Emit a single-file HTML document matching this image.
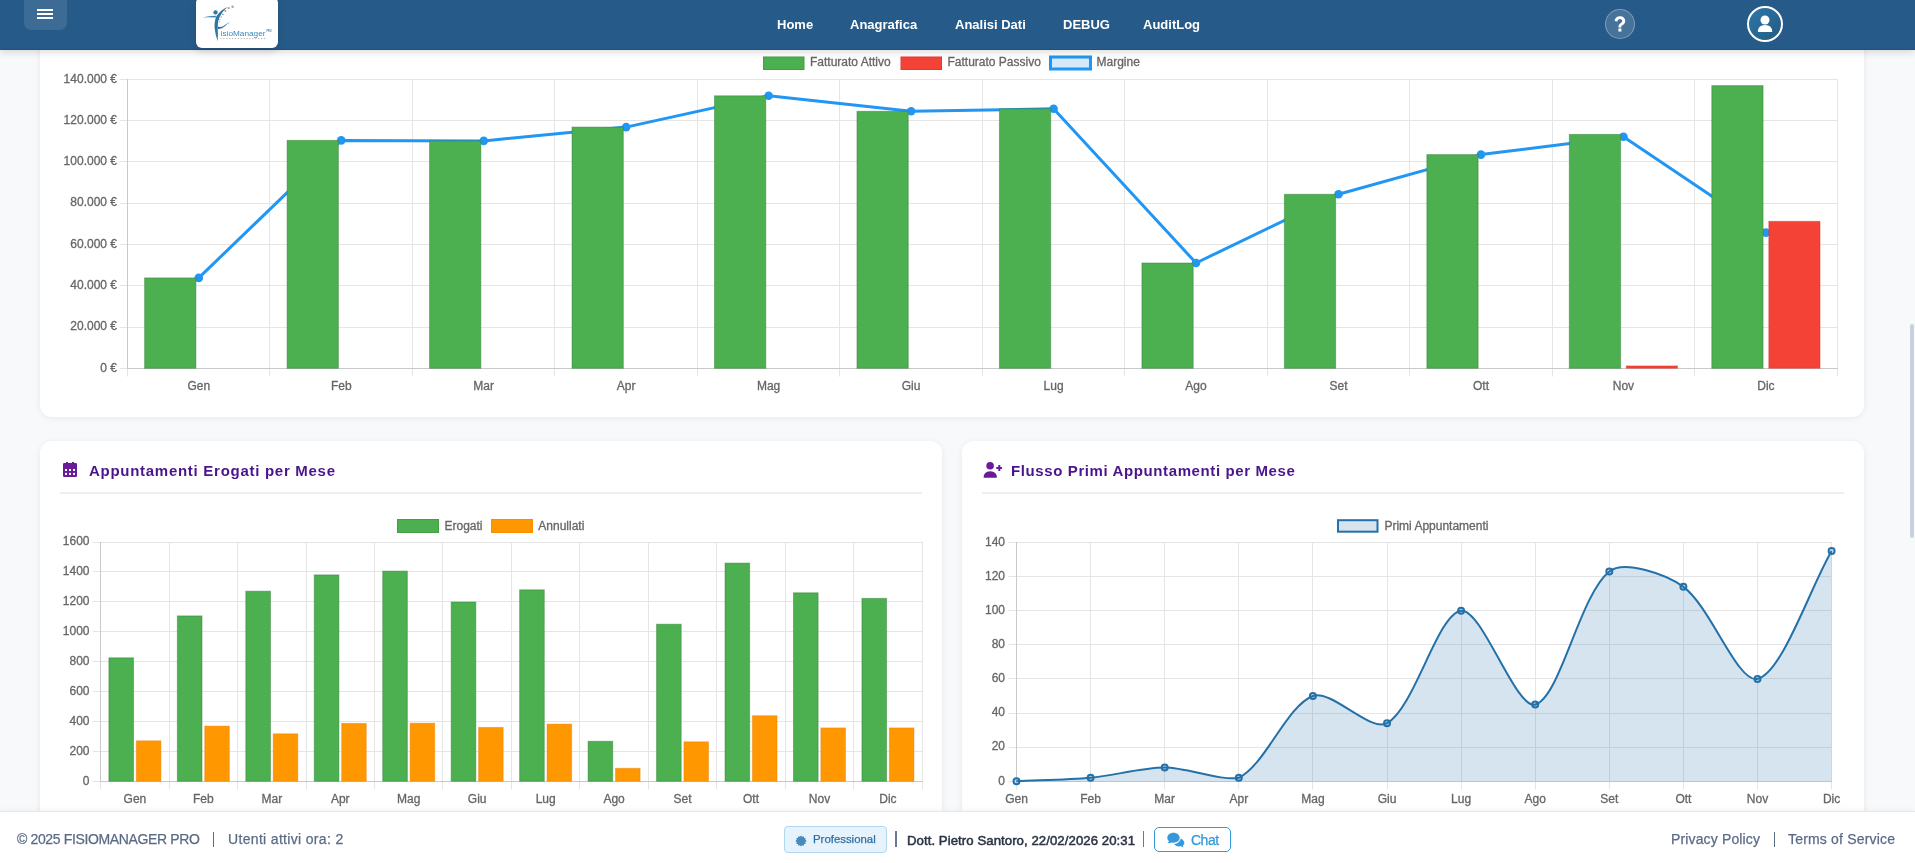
<!DOCTYPE html>
<html><head><meta charset="utf-8"><style>
*{box-sizing:border-box;margin:0;padding:0}
html,body{width:1915px;height:863px;overflow:hidden;background:#f8f9fb;font-family:"Liberation Sans", sans-serif}
.t{position:absolute;white-space:nowrap;line-height:1;will-change:transform}
.card{position:absolute;background:#fff;border-radius:12px;box-shadow:0 1px 6px rgba(20,30,50,0.075)}
.cl{font-family:"Liberation Sans", sans-serif;font-size:12px;fill:#666;stroke:#666;stroke-width:0.3px}
#nav{position:absolute;left:0;top:0;width:1915px;height:50px;background:#265b89;box-shadow:0 2px 8px rgba(0,0,0,0.15);border-bottom:1px solid #1f5080;z-index:5}
#footer{position:absolute;left:0;top:811px;width:1915px;height:52px;background:#fff;border-top:1px solid #e2e8f0;z-index:6;box-shadow:0 -2px 6px rgba(0,0,0,0.035)}
#footer .t{-webkit-text-stroke:0.25px currentColor}
.bg{stroke:rgba(46,125,50,0.45);stroke-width:1px} .br{stroke:rgba(198,40,40,0.35);stroke-width:1px} .bo{stroke:rgba(230,120,0,0.4);stroke-width:1px}
</style></head><body>
<div class="card" style="left:40px;top:20px;width:1824px;height:397px"></div>
<div class="card" style="left:40px;top:441px;width:902px;height:440px"></div>
<div class="card" style="left:962px;top:441px;width:902px;height:440px"></div>
<!-- card headers -->
<div style="position:absolute;left:60px;top:492px;width:862px;height:2px;background:#eceef1"></div>
<div style="position:absolute;left:982px;top:492px;width:862px;height:2px;background:#eceef1"></div>
<svg width="16" height="16" viewBox="0 0 16 16" style="position:absolute;left:62px;top:461px">
<path fill="#6a1b9a" d="M4,1h2v2h-2z M10,1h2v2h-2z M1,3.2Q1,2 2.2,2H13.8Q15,2 15,3.2V14.8Q15,16 13.8,16H2.2Q1,16 1,14.8Z"/>
<g fill="#fff"><rect x="3" y="8" width="2" height="2"/><rect x="7" y="8" width="2" height="2"/><rect x="11" y="8" width="2" height="2"/><rect x="3" y="11.9" width="2" height="2"/><rect x="7" y="11.9" width="2" height="2"/><rect x="11" y="11.9" width="2" height="2"/></g>
</svg>
<div class="t" style="left:88.5px;top:463.3px;font-size:15px;color:#4a148c;font-weight:bold;letter-spacing:0.72px;">Appuntamenti Erogati per Mese</div>

<svg width="20" height="18" viewBox="0 0 20 18" style="position:absolute;left:982px;top:461px">
<circle cx="8.1" cy="4.8" r="3.8" fill="#6a1b9a"/>
<path d="M1.6,16.7 Q1.6,10.2 8.1,10.2 Q14.9,10.2 14.9,16.7Z" fill="#6a1b9a"/>
<rect x="14.3" y="6" width="6" height="2" fill="#6a1b9a"/><rect x="16.3" y="4" width="2" height="6" fill="#6a1b9a"/>
</svg>
<div class="t" style="left:1010.5px;top:463.3px;font-size:15px;color:#4a148c;font-weight:bold;letter-spacing:0.61px;">Flusso Primi Appuntamenti per Mese</div>

<svg width="1915" height="863" style="position:absolute;left:0;top:0;will-change:transform" shape-rendering="auto">
<line x1="119.5" y1="368.5" x2="1838.0" y2="368.5" stroke="#e5e5e5" stroke-width="1"/>
<text x="117" y="371.6" text-anchor="end" class="cl">0 €</text>
<line x1="119.5" y1="327.5" x2="1838.0" y2="327.5" stroke="#e5e5e5" stroke-width="1"/>
<text x="117" y="330.3" text-anchor="end" class="cl">20.000 €</text>
<line x1="119.5" y1="285.5" x2="1838.0" y2="285.5" stroke="#e5e5e5" stroke-width="1"/>
<text x="117" y="289" text-anchor="end" class="cl">40.000 €</text>
<line x1="119.5" y1="244.5" x2="1838.0" y2="244.5" stroke="#e5e5e5" stroke-width="1"/>
<text x="117" y="247.7" text-anchor="end" class="cl">60.000 €</text>
<line x1="119.5" y1="203.5" x2="1838.0" y2="203.5" stroke="#e5e5e5" stroke-width="1"/>
<text x="117" y="206.4" text-anchor="end" class="cl">80.000 €</text>
<line x1="119.5" y1="161.5" x2="1838.0" y2="161.5" stroke="#e5e5e5" stroke-width="1"/>
<text x="117" y="165.1" text-anchor="end" class="cl">100.000 €</text>
<line x1="119.5" y1="120.5" x2="1838.0" y2="120.5" stroke="#e5e5e5" stroke-width="1"/>
<text x="117" y="123.8" text-anchor="end" class="cl">120.000 €</text>
<line x1="119.5" y1="79.5" x2="1838.0" y2="79.5" stroke="#e5e5e5" stroke-width="1"/>
<text x="117" y="82.5" text-anchor="end" class="cl">140.000 €</text>
<line x1="127.5" y1="79.0" x2="127.5" y2="376.5" stroke="#e5e5e5" stroke-width="1"/>
<line x1="269.5" y1="79.0" x2="269.5" y2="376.5" stroke="#e5e5e5" stroke-width="1"/>
<line x1="412.5" y1="79.0" x2="412.5" y2="376.5" stroke="#e5e5e5" stroke-width="1"/>
<line x1="554.5" y1="79.0" x2="554.5" y2="376.5" stroke="#e5e5e5" stroke-width="1"/>
<line x1="697.5" y1="79.0" x2="697.5" y2="376.5" stroke="#e5e5e5" stroke-width="1"/>
<line x1="839.5" y1="79.0" x2="839.5" y2="376.5" stroke="#e5e5e5" stroke-width="1"/>
<line x1="982.5" y1="79.0" x2="982.5" y2="376.5" stroke="#e5e5e5" stroke-width="1"/>
<line x1="1124.5" y1="79.0" x2="1124.5" y2="376.5" stroke="#e5e5e5" stroke-width="1"/>
<line x1="1267.5" y1="79.0" x2="1267.5" y2="376.5" stroke="#e5e5e5" stroke-width="1"/>
<line x1="1409.5" y1="79.0" x2="1409.5" y2="376.5" stroke="#e5e5e5" stroke-width="1"/>
<line x1="1552.5" y1="79.0" x2="1552.5" y2="376.5" stroke="#e5e5e5" stroke-width="1"/>
<line x1="1694.5" y1="79.0" x2="1694.5" y2="376.5" stroke="#e5e5e5" stroke-width="1"/>
<line x1="1837.5" y1="79.0" x2="1837.5" y2="376.5" stroke="#e5e5e5" stroke-width="1"/>
<text x="198.75" y="389.5" text-anchor="middle" class="cl">Gen</text>
<text x="341.22" y="389.5" text-anchor="middle" class="cl">Feb</text>
<text x="483.69" y="389.5" text-anchor="middle" class="cl">Mar</text>
<text x="626.16" y="389.5" text-anchor="middle" class="cl">Apr</text>
<text x="768.63" y="389.5" text-anchor="middle" class="cl">Mag</text>
<text x="911.11" y="389.5" text-anchor="middle" class="cl">Giu</text>
<text x="1053.58" y="389.5" text-anchor="middle" class="cl">Lug</text>
<text x="1196.05" y="389.5" text-anchor="middle" class="cl">Ago</text>
<text x="1338.51" y="389.5" text-anchor="middle" class="cl">Set</text>
<text x="1480.98" y="389.5" text-anchor="middle" class="cl">Ott</text>
<text x="1623.45" y="389.5" text-anchor="middle" class="cl">Nov</text>
<text x="1765.92" y="389.5" text-anchor="middle" class="cl">Dic</text>
<line x1="127.5" y1="79.0" x2="127.5" y2="369.0" stroke="#c9c9c9"/>
<line x1="127.0" y1="368.5" x2="1838.0" y2="368.5" stroke="#c9c9c9"/>
<polyline points="198.75,277.9 341.22,140.4 483.69,140.9 626.16,127.1 768.63,95.8 911.11,111.3 1053.58,108.8 1196.05,263 1338.51,194.3 1480.98,154.6 1623.45,136.8 1765.92,232.6" fill="none" stroke="#2196F3" stroke-width="3" stroke-linejoin="round"/>
<circle cx="198.75" cy="277.9" r="4.3" fill="#2196F3"/>
<circle cx="341.22" cy="140.4" r="4.3" fill="#2196F3"/>
<circle cx="483.69" cy="140.9" r="4.3" fill="#2196F3"/>
<circle cx="626.16" cy="127.1" r="4.3" fill="#2196F3"/>
<circle cx="768.63" cy="95.8" r="4.3" fill="#2196F3"/>
<circle cx="911.11" cy="111.3" r="4.3" fill="#2196F3"/>
<circle cx="1053.58" cy="108.8" r="4.3" fill="#2196F3"/>
<circle cx="1196.05" cy="263" r="4.3" fill="#2196F3"/>
<circle cx="1338.51" cy="194.3" r="4.3" fill="#2196F3"/>
<circle cx="1480.98" cy="154.6" r="4.3" fill="#2196F3"/>
<circle cx="1623.45" cy="136.8" r="4.3" fill="#2196F3"/>
<circle cx="1765.92" cy="232.6" r="4.3" fill="#2196F3"/>
<rect x="144.62" y="277.9" width="51.29" height="90.4" fill="#4CAF50" class="bg"/>
<rect x="287.09" y="140.4" width="51.29" height="227.9" fill="#4CAF50" class="bg"/>
<rect x="429.56" y="140.9" width="51.29" height="227.4" fill="#4CAF50" class="bg"/>
<rect x="572.03" y="127.1" width="51.29" height="241.2" fill="#4CAF50" class="bg"/>
<rect x="714.5" y="95.8" width="51.29" height="272.5" fill="#4CAF50" class="bg"/>
<rect x="856.97" y="111.3" width="51.29" height="257" fill="#4CAF50" class="bg"/>
<rect x="999.44" y="108.8" width="51.29" height="259.5" fill="#4CAF50" class="bg"/>
<rect x="1141.91" y="263" width="51.29" height="105.3" fill="#4CAF50" class="bg"/>
<rect x="1284.38" y="194.3" width="51.29" height="174" fill="#4CAF50" class="bg"/>
<rect x="1426.85" y="154.6" width="51.29" height="213.7" fill="#4CAF50" class="bg"/>
<rect x="1569.32" y="134.4" width="51.29" height="233.9" fill="#4CAF50" class="bg"/>
<rect x="1626.3" y="365.9" width="51.29" height="2.4" fill="#F44336" class="br"/>
<rect x="1711.79" y="85.6" width="51.29" height="282.7" fill="#4CAF50" class="bg"/>
<rect x="1768.77" y="221.3" width="51.29" height="147" fill="#F44336" class="br"/>
<rect x="763.5" y="57" width="40.5" height="12.5" fill="#4CAF50" stroke="#43A047" stroke-width="1"/>
<text x="810" y="66" class="cl">Fatturato Attivo</text>
<rect x="901" y="57" width="40.5" height="12.5" fill="#F44336" stroke="#E53935" stroke-width="1"/>
<text x="947.5" y="66" class="cl">Fatturato Passivo</text>
<rect x="1050.5" y="57" width="40" height="12" fill="#d3e9fc" stroke="#2196F3" stroke-width="3"/>
<text x="1096.5" y="66" class="cl">Margine</text>
<line x1="92.5" y1="781.5" x2="923.0" y2="781.5" stroke="#e5e5e5" stroke-width="1"/>
<text x="89.5" y="784.55" text-anchor="end" class="cl">0</text>
<line x1="92.5" y1="751.5" x2="923.0" y2="751.5" stroke="#e5e5e5" stroke-width="1"/>
<text x="89.5" y="754.65" text-anchor="end" class="cl">200</text>
<line x1="92.5" y1="721.5" x2="923.0" y2="721.5" stroke="#e5e5e5" stroke-width="1"/>
<text x="89.5" y="724.75" text-anchor="end" class="cl">400</text>
<line x1="92.5" y1="691.5" x2="923.0" y2="691.5" stroke="#e5e5e5" stroke-width="1"/>
<text x="89.5" y="694.85" text-anchor="end" class="cl">600</text>
<line x1="92.5" y1="661.5" x2="923.0" y2="661.5" stroke="#e5e5e5" stroke-width="1"/>
<text x="89.5" y="664.95" text-anchor="end" class="cl">800</text>
<line x1="92.5" y1="631.5" x2="923.0" y2="631.5" stroke="#e5e5e5" stroke-width="1"/>
<text x="89.5" y="635.05" text-anchor="end" class="cl">1000</text>
<line x1="92.5" y1="601.5" x2="923.0" y2="601.5" stroke="#e5e5e5" stroke-width="1"/>
<text x="89.5" y="605.15" text-anchor="end" class="cl">1200</text>
<line x1="92.5" y1="571.5" x2="923.0" y2="571.5" stroke="#e5e5e5" stroke-width="1"/>
<text x="89.5" y="575.25" text-anchor="end" class="cl">1400</text>
<line x1="92.5" y1="542.5" x2="923.0" y2="542.5" stroke="#e5e5e5" stroke-width="1"/>
<text x="89.5" y="545.35" text-anchor="end" class="cl">1600</text>
<line x1="100.5" y1="542.0" x2="100.5" y2="789.5" stroke="#e5e5e5" stroke-width="1"/>
<line x1="169.5" y1="542.0" x2="169.5" y2="789.5" stroke="#e5e5e5" stroke-width="1"/>
<line x1="237.5" y1="542.0" x2="237.5" y2="789.5" stroke="#e5e5e5" stroke-width="1"/>
<line x1="306.5" y1="542.0" x2="306.5" y2="789.5" stroke="#e5e5e5" stroke-width="1"/>
<line x1="374.5" y1="542.0" x2="374.5" y2="789.5" stroke="#e5e5e5" stroke-width="1"/>
<line x1="442.5" y1="542.0" x2="442.5" y2="789.5" stroke="#e5e5e5" stroke-width="1"/>
<line x1="511.5" y1="542.0" x2="511.5" y2="789.5" stroke="#e5e5e5" stroke-width="1"/>
<line x1="579.5" y1="542.0" x2="579.5" y2="789.5" stroke="#e5e5e5" stroke-width="1"/>
<line x1="648.5" y1="542.0" x2="648.5" y2="789.5" stroke="#e5e5e5" stroke-width="1"/>
<line x1="716.5" y1="542.0" x2="716.5" y2="789.5" stroke="#e5e5e5" stroke-width="1"/>
<line x1="785.5" y1="542.0" x2="785.5" y2="789.5" stroke="#e5e5e5" stroke-width="1"/>
<line x1="853.5" y1="542.0" x2="853.5" y2="789.5" stroke="#e5e5e5" stroke-width="1"/>
<line x1="922.5" y1="542.0" x2="922.5" y2="789.5" stroke="#e5e5e5" stroke-width="1"/>
<text x="134.9" y="802.8" text-anchor="middle" class="cl">Gen</text>
<text x="203.36" y="802.8" text-anchor="middle" class="cl">Feb</text>
<text x="271.82" y="802.8" text-anchor="middle" class="cl">Mar</text>
<text x="340.28" y="802.8" text-anchor="middle" class="cl">Apr</text>
<text x="408.73" y="802.8" text-anchor="middle" class="cl">Mag</text>
<text x="477.19" y="802.8" text-anchor="middle" class="cl">Giu</text>
<text x="545.65" y="802.8" text-anchor="middle" class="cl">Lug</text>
<text x="614.11" y="802.8" text-anchor="middle" class="cl">Ago</text>
<text x="682.56" y="802.8" text-anchor="middle" class="cl">Set</text>
<text x="751.02" y="802.8" text-anchor="middle" class="cl">Ott</text>
<text x="819.48" y="802.8" text-anchor="middle" class="cl">Nov</text>
<text x="887.94" y="802.8" text-anchor="middle" class="cl">Dic</text>
<line x1="100.5" y1="542.0" x2="100.5" y2="782.0" stroke="#c9c9c9"/>
<line x1="100.0" y1="781.5" x2="923.0" y2="781.5" stroke="#c9c9c9"/>
<rect x="108.89" y="657.8" width="24.64" height="123.45" fill="#4CAF50" class="bg"/>
<rect x="136.27" y="740.8" width="24.64" height="40.45" fill="#FF9800" class="bo"/>
<rect x="177.35" y="615.9" width="24.64" height="165.35" fill="#4CAF50" class="bg"/>
<rect x="204.73" y="726.1" width="24.64" height="55.15" fill="#FF9800" class="bo"/>
<rect x="245.8" y="591.2" width="24.64" height="190.05" fill="#4CAF50" class="bg"/>
<rect x="273.19" y="733.8" width="24.64" height="47.45" fill="#FF9800" class="bo"/>
<rect x="314.26" y="574.9" width="24.64" height="206.35" fill="#4CAF50" class="bg"/>
<rect x="341.65" y="723.4" width="24.64" height="57.85" fill="#FF9800" class="bo"/>
<rect x="382.72" y="571.1" width="24.64" height="210.15" fill="#4CAF50" class="bg"/>
<rect x="410.1" y="723.2" width="24.64" height="58.05" fill="#FF9800" class="bo"/>
<rect x="451.18" y="602" width="24.64" height="179.25" fill="#4CAF50" class="bg"/>
<rect x="478.56" y="727.4" width="24.64" height="53.85" fill="#FF9800" class="bo"/>
<rect x="519.64" y="589.8" width="24.64" height="191.45" fill="#4CAF50" class="bg"/>
<rect x="547.02" y="724.1" width="24.64" height="57.15" fill="#FF9800" class="bo"/>
<rect x="588.09" y="741.3" width="24.64" height="39.95" fill="#4CAF50" class="bg"/>
<rect x="615.48" y="768.3" width="24.64" height="12.95" fill="#FF9800" class="bo"/>
<rect x="656.55" y="624.2" width="24.64" height="157.05" fill="#4CAF50" class="bg"/>
<rect x="683.93" y="741.8" width="24.64" height="39.45" fill="#FF9800" class="bo"/>
<rect x="725.01" y="563.1" width="24.64" height="218.15" fill="#4CAF50" class="bg"/>
<rect x="752.39" y="715.7" width="24.64" height="65.55" fill="#FF9800" class="bo"/>
<rect x="793.47" y="592.8" width="24.64" height="188.45" fill="#4CAF50" class="bg"/>
<rect x="820.85" y="727.9" width="24.64" height="53.35" fill="#FF9800" class="bo"/>
<rect x="861.92" y="598.4" width="24.64" height="182.85" fill="#4CAF50" class="bg"/>
<rect x="889.31" y="727.9" width="24.64" height="53.35" fill="#FF9800" class="bo"/>
<rect x="397.5" y="519.5" width="41" height="13" fill="#4CAF50" stroke="#43A047" stroke-width="1"/>
<text x="444.5" y="529.5" class="cl">Erogati</text>
<rect x="491.5" y="519.5" width="41" height="13" fill="#FF9800" stroke="#FB8C00" stroke-width="1"/>
<text x="538.3" y="529.5" class="cl">Annullati</text>
<line x1="1008.5" y1="781.5" x2="1832.0" y2="781.5" stroke="#e5e5e5" stroke-width="1"/>
<text x="1005" y="784.5" text-anchor="end" class="cl">0</text>
<line x1="1008.5" y1="747.5" x2="1832.0" y2="747.5" stroke="#e5e5e5" stroke-width="1"/>
<text x="1005" y="750.4" text-anchor="end" class="cl">20</text>
<line x1="1008.5" y1="713.5" x2="1832.0" y2="713.5" stroke="#e5e5e5" stroke-width="1"/>
<text x="1005" y="716.3" text-anchor="end" class="cl">40</text>
<line x1="1008.5" y1="678.5" x2="1832.0" y2="678.5" stroke="#e5e5e5" stroke-width="1"/>
<text x="1005" y="682.2" text-anchor="end" class="cl">60</text>
<line x1="1008.5" y1="644.5" x2="1832.0" y2="644.5" stroke="#e5e5e5" stroke-width="1"/>
<text x="1005" y="648.1" text-anchor="end" class="cl">80</text>
<line x1="1008.5" y1="610.5" x2="1832.0" y2="610.5" stroke="#e5e5e5" stroke-width="1"/>
<text x="1005" y="614" text-anchor="end" class="cl">100</text>
<line x1="1008.5" y1="576.5" x2="1832.0" y2="576.5" stroke="#e5e5e5" stroke-width="1"/>
<text x="1005" y="579.9" text-anchor="end" class="cl">120</text>
<line x1="1008.5" y1="542.5" x2="1832.0" y2="542.5" stroke="#e5e5e5" stroke-width="1"/>
<text x="1005" y="545.8" text-anchor="end" class="cl">140</text>
<line x1="1016.5" y1="542.0" x2="1016.5" y2="789.5" stroke="#e5e5e5" stroke-width="1"/>
<text x="1016.5" y="802.5" text-anchor="middle" class="cl">Gen</text>
<line x1="1090.5" y1="542.0" x2="1090.5" y2="789.5" stroke="#e5e5e5" stroke-width="1"/>
<text x="1090.6" y="802.5" text-anchor="middle" class="cl">Feb</text>
<line x1="1164.5" y1="542.0" x2="1164.5" y2="789.5" stroke="#e5e5e5" stroke-width="1"/>
<text x="1164.7" y="802.5" text-anchor="middle" class="cl">Mar</text>
<line x1="1238.5" y1="542.0" x2="1238.5" y2="789.5" stroke="#e5e5e5" stroke-width="1"/>
<text x="1238.8" y="802.5" text-anchor="middle" class="cl">Apr</text>
<line x1="1312.5" y1="542.0" x2="1312.5" y2="789.5" stroke="#e5e5e5" stroke-width="1"/>
<text x="1312.9" y="802.5" text-anchor="middle" class="cl">Mag</text>
<line x1="1387.5" y1="542.0" x2="1387.5" y2="789.5" stroke="#e5e5e5" stroke-width="1"/>
<text x="1387" y="802.5" text-anchor="middle" class="cl">Giu</text>
<line x1="1461.5" y1="542.0" x2="1461.5" y2="789.5" stroke="#e5e5e5" stroke-width="1"/>
<text x="1461.1" y="802.5" text-anchor="middle" class="cl">Lug</text>
<line x1="1535.5" y1="542.0" x2="1535.5" y2="789.5" stroke="#e5e5e5" stroke-width="1"/>
<text x="1535.2" y="802.5" text-anchor="middle" class="cl">Ago</text>
<line x1="1609.5" y1="542.0" x2="1609.5" y2="789.5" stroke="#e5e5e5" stroke-width="1"/>
<text x="1609.3" y="802.5" text-anchor="middle" class="cl">Set</text>
<line x1="1683.5" y1="542.0" x2="1683.5" y2="789.5" stroke="#e5e5e5" stroke-width="1"/>
<text x="1683.4" y="802.5" text-anchor="middle" class="cl">Ott</text>
<line x1="1757.5" y1="542.0" x2="1757.5" y2="789.5" stroke="#e5e5e5" stroke-width="1"/>
<text x="1757.5" y="802.5" text-anchor="middle" class="cl">Nov</text>
<line x1="1831.5" y1="542.0" x2="1831.5" y2="789.5" stroke="#e5e5e5" stroke-width="1"/>
<text x="1831.6" y="802.5" text-anchor="middle" class="cl">Dic</text>
<line x1="1016.5" y1="542.0" x2="1016.5" y2="782.0" stroke="#c9c9c9"/>
<line x1="1016.0" y1="781.5" x2="1832.0" y2="781.5" stroke="#c9c9c9"/>
<path d="M1016.5,781.2 C1038.73,780.18 1068.46,779.83 1090.6,777.79 C1112.92,775.74 1142.47,767.56 1164.7,767.56 C1186.93,767.56 1220.84,781.2 1238.8,777.79 C1265.3,764.98 1286.98,705.49 1312.9,695.95 C1331.44,689.12 1370.57,732.68 1387,723.23 C1415.03,707.11 1437.54,613.68 1461.1,610.7 C1482,608.06 1515.65,709.65 1535.2,704.48 C1560.11,697.88 1579.6,595.06 1609.3,571.49 C1624.06,559.77 1666.05,574.25 1683.4,586.83 C1710.51,606.48 1737.74,683.67 1757.5,678.9 C1782.2,672.93 1809.37,589.39 1831.6,551.02 L1831.6,781.2 L1016.5,781.2 Z" fill="rgba(35,113,168,0.19)"/>
<path d="M1016.5,781.2 C1038.73,780.18 1068.46,779.83 1090.6,777.79 C1112.92,775.74 1142.47,767.56 1164.7,767.56 C1186.93,767.56 1220.84,781.2 1238.8,777.79 C1265.3,764.98 1286.98,705.49 1312.9,695.95 C1331.44,689.12 1370.57,732.68 1387,723.23 C1415.03,707.11 1437.54,613.68 1461.1,610.7 C1482,608.06 1515.65,709.65 1535.2,704.48 C1560.11,697.88 1579.6,595.06 1609.3,571.49 C1624.06,559.77 1666.05,574.25 1683.4,586.83 C1710.51,606.48 1737.74,683.67 1757.5,678.9 C1782.2,672.93 1809.37,589.39 1831.6,551.02" fill="none" stroke="#2371a8" stroke-width="2"/>
<circle cx="1016.5" cy="781.2" r="3" fill="rgba(35,113,168,0.19)" stroke="#2371a8" stroke-width="2"/>
<circle cx="1090.6" cy="777.79" r="3" fill="rgba(35,113,168,0.19)" stroke="#2371a8" stroke-width="2"/>
<circle cx="1164.7" cy="767.56" r="3" fill="rgba(35,113,168,0.19)" stroke="#2371a8" stroke-width="2"/>
<circle cx="1238.8" cy="777.79" r="3" fill="rgba(35,113,168,0.19)" stroke="#2371a8" stroke-width="2"/>
<circle cx="1312.9" cy="695.95" r="3" fill="rgba(35,113,168,0.19)" stroke="#2371a8" stroke-width="2"/>
<circle cx="1387" cy="723.23" r="3" fill="rgba(35,113,168,0.19)" stroke="#2371a8" stroke-width="2"/>
<circle cx="1461.1" cy="610.7" r="3" fill="rgba(35,113,168,0.19)" stroke="#2371a8" stroke-width="2"/>
<circle cx="1535.2" cy="704.48" r="3" fill="rgba(35,113,168,0.19)" stroke="#2371a8" stroke-width="2"/>
<circle cx="1609.3" cy="571.49" r="3" fill="rgba(35,113,168,0.19)" stroke="#2371a8" stroke-width="2"/>
<circle cx="1683.4" cy="586.83" r="3" fill="rgba(35,113,168,0.19)" stroke="#2371a8" stroke-width="2"/>
<circle cx="1757.5" cy="678.9" r="3" fill="rgba(35,113,168,0.19)" stroke="#2371a8" stroke-width="2"/>
<circle cx="1831.6" cy="551.02" r="3" fill="rgba(35,113,168,0.19)" stroke="#2371a8" stroke-width="2"/>
<rect x="1338" y="520.2" width="39.5" height="11.5" fill="#d6e4ee" stroke="#2371a8" stroke-width="2"/>
<text x="1384.4" y="529.5" class="cl">Primi Appuntamenti</text>
</svg>
<!-- scrollbar -->
<div style="position:absolute;left:1910px;top:324px;width:4px;height:214px;border-radius:2px;background:#c8d1dd"></div>
<div id="nav">
 <div style="position:absolute;left:24px;top:-10px;width:43px;height:40px;border-radius:7px;background:rgba(255,255,255,0.1)"></div>
 <div style="position:absolute;left:37px;top:8.7px;width:16px;height:2px;background:#fff"></div>
 <div style="position:absolute;left:37px;top:13px;width:16px;height:2px;background:#fff"></div>
 <div style="position:absolute;left:37px;top:17.1px;width:16px;height:2px;background:#fff"></div>
 <div style="position:absolute;left:196px;top:-3px;width:82px;height:51px;border-radius:6px;background:#fff;box-shadow:0 3px 8px rgba(0,0,0,0.15);overflow:hidden"><svg width="82" height="54" viewBox="0 0 82 54" style="position:absolute;left:0;top:3px">
<g transform="translate(-196,0)">
<circle cx="215.5" cy="12.4" r="2.15" fill="#2b76a6"/>
<path d="M202.4,17.4 Q209,15.5 216.4,15.7 L216.2,17.5 Q209,17.1 202.4,17.4Z" fill="#3f8bbb"/>
<path d="M227.4,6.9 Q220.5,10 216.6,16 Q214.2,21 214.6,28 Q215.3,35 217.7,41.2 Q218.1,34 217.7,28 Q217.4,21.5 219.6,17 Q222.6,11 227.4,6.9Z" fill="#2b76a6"/>
<path d="M217.8,26.4 Q221.5,28 225,25 Q227.6,23 230.2,22.2 Q227.2,23.6 224.6,26.6 Q221,29.6 217.7,28.8Z" fill="#2b76a6"/>
<g fill="#a4a4a4"><circle cx="232.6" cy="6.7" r="1.2"/><circle cx="228.6" cy="8.1" r="1.1"/><circle cx="225.3" cy="11.1" r="1"/><circle cx="222.9" cy="14.3" r="0.9"/><circle cx="221.1" cy="17" r="0.8"/><circle cx="219.9" cy="19.6" r="0.7"/><circle cx="219.4" cy="21.9" r="0.6"/></g>
<text x="220.7" y="36.2" font-family="Liberation Sans, sans-serif" font-size="7.6" fill="#3a87ba" textLength="44.8" lengthAdjust="spacingAndGlyphs">isioManager</text>
<text x="266.4" y="32" font-family="Liberation Sans, sans-serif" font-size="3" font-weight="bold" fill="#3a87ba" textLength="5.4" lengthAdjust="spacingAndGlyphs">PRO</text>
<line x1="220.3" y1="38.6" x2="267" y2="38.6" stroke="#b4b4b4" stroke-width="1" stroke-dasharray="1.3,1.6"/>
</g></svg></div>
 <div class="t" style="left:777.3px;top:18.3px;font-size:13px;color:#fff;font-weight:bold;">Home</div>

 <div class="t" style="left:850.4px;top:18.3px;font-size:13px;color:#fff;font-weight:bold;">Anagrafica</div>

 <div class="t" style="left:955.4px;top:18.3px;font-size:13px;color:#fff;font-weight:bold;">Analisi Dati</div>

 <div class="t" style="left:1062.5px;top:18.3px;font-size:13px;color:#fff;font-weight:bold;">DEBUG</div>

 <div class="t" style="left:1143.4px;top:18.3px;font-size:13px;color:#fff;font-weight:bold;">AuditLog</div>

 <div style="position:absolute;left:1605px;top:9px;width:30px;height:30px;border-radius:50%;background:rgba(255,255,255,0.15);border:1px solid rgba(255,255,255,0.3)"></div>
 <svg width="12" height="16" viewBox="0 0 12 16" style="position:absolute;left:1613.8px;top:16.3px"><path fill="#fff" d="M6,0.3C2.9,0.3 0.9,2.2 0.6,4.9L3.4,5.5C3.6,4 4.5,3.1 5.9,3.1C7.3,3.1 8.2,3.9 8.2,5C8.2,6.1 7.5,6.6 6.5,7.3C5.2,8.2 4.5,9 4.5,10.7V11.4H7.3V10.9C7.3,10 7.8,9.6 8.7,9C10,8.1 11.2,7.1 11.2,4.9C11.2,2.1 9,0.3 6,0.3Z M4.4,12.6H7.4V15.6H4.4Z"/></svg>
 <div style="position:absolute;left:1747px;top:6px;width:36px;height:36px;border-radius:50%;background:linear-gradient(135deg,#2d78a8,#225a82);border:2px solid #fff"></div>
 <svg width="16" height="18" viewBox="0 0 16 18" style="position:absolute;left:1757px;top:15px"><circle cx="8" cy="5" r="4.5" fill="#fff"/><path d="M0.8,17.1 Q0.8,10 8,10 Q15.3,10 15.3,17.1Z" fill="#fff"/></svg>
</div>
<div id="footer">
 <div class="t" style="left:16.5px;top:20.15px;font-size:14px;color:#5b6b86;font-weight:normal;letter-spacing:-0.36px;">© 2025 FISIOMANAGER PRO</div>

 <div style="position:absolute;left:212.5px;top:20px;width:1.4px;height:14.5px;background:#5b6b86"></div>
 <div class="t" style="left:227.5px;top:20.15px;font-size:14px;color:#5b6b86;font-weight:normal;letter-spacing:0.33px;">Utenti attivi ora: 2</div>

 <div style="position:absolute;left:784.3px;top:13.8px;width:102.4px;height:26.8px;border-radius:4px;background:#e6f3fc;border:1px solid #b0d6f0"></div>
 <svg width="12" height="12" viewBox="-6 -6 12 12" style="position:absolute;left:794.7px;top:23.4px"><path fill="#4a8bbd" d="M5.6,0 L4.25,1.14 L4.85,2.8 L3.11,3.11 L2.8,4.85 L1.14,4.25 L0,5.6 L-1.14,4.25 L-2.8,4.85 L-3.11,3.11 L-4.85,2.8 L-4.25,1.14 L-5.6,0 L-4.25,-1.14 L-4.85,-2.8 L-3.11,-3.11 L-2.8,-4.85 L-1.14,-4.25 L-0,-5.6 L1.14,-4.25 L2.8,-4.85 L3.11,-3.11 L4.85,-2.8 L4.25,-1.14Z"/></svg>
 <div class="t" style="left:812.7px;top:22.15px;font-size:11.4px;color:#2e6fa0;font-weight:normal;">Professional</div>

 <div style="position:absolute;left:895.3px;top:19.4px;width:1.4px;height:15.2px;background:#6a7890"></div>
 <div class="t" style="left:906.7px;top:21.63px;font-size:13.2px;color:#2a3343;font-weight:normal;letter-spacing:0.06px;-webkit-text-stroke:0.5px #2a3343;">Dott. Pietro Santoro, 22/02/2026 20:31</div>

 <div style="position:absolute;left:1143px;top:19.4px;width:1.4px;height:15.2px;background:#6a7890"></div>
 <div style="position:absolute;left:1154.1px;top:14.8px;width:76.7px;height:25.4px;border-radius:5px;background:#fff;border:1.5px solid #3498db"></div>
 <svg width="18" height="17" viewBox="0 0 18 16" style="position:absolute;left:1166.6px;top:19.6px"><path fill="#3498db" d="M6.5,0.3C3,0.3 0.3,2.5 0.3,5.3C0.3,6.7 1,8 2.1,8.9L0.3,10.6C1.9,10.7 3.5,10.3 4.5,9.9C5.1,10.1 5.8,10.2 6.5,10.2C10,10.2 12.7,8 12.7,5.3C12.7,2.5 10,0.3 6.5,0.3Z"/><path fill="#3498db" stroke="#fff" stroke-width="0.8" d="M13.2,5.6C13.2,9 10.2,11.2 6.4,11.1C7.4,13 9.5,14.4 12,14.4C12.6,14.4 13.2,14.3 13.8,14.1C14.7,14.6 16,15.2 17.6,15.3L16.1,13.5C17.1,12.6 17.6,11.5 17.6,10.3C17.6,8.2 15.8,6.4 13.2,5.6Z"/></svg>
 <div class="t" style="left:1190.6px;top:21.05px;font-size:14px;color:#3498db;font-weight:normal;letter-spacing:-0.5px;">Chat</div>

 <div class="t" style="left:1671.1px;top:20.45px;font-size:14px;color:#5b6b86;font-weight:normal;letter-spacing:0.14px;">Privacy Policy</div>

 <div style="position:absolute;left:1773.5px;top:19.5px;width:1.4px;height:15.5px;background:#5b6b86"></div>
 <div class="t" style="left:1788.4px;top:20.45px;font-size:14px;color:#5b6b86;font-weight:normal;letter-spacing:0.18px;">Terms of Service</div>

</div>
</body></html>
